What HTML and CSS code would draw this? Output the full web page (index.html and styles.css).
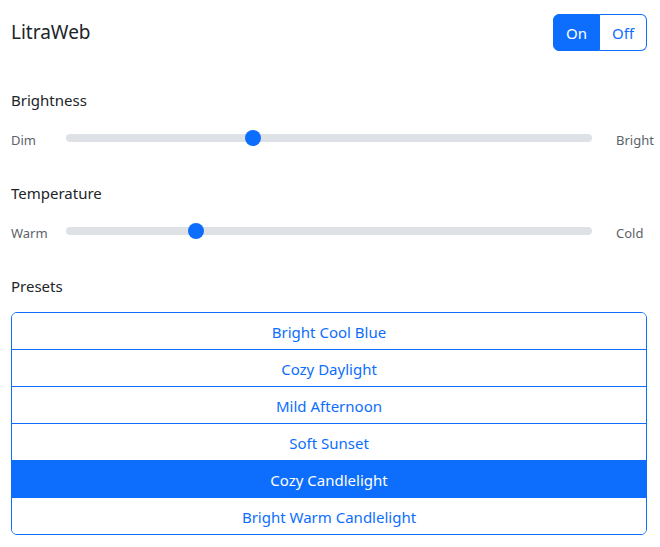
FILE: index.html
```html
<!DOCTYPE html>
<html lang="en">
<head>
<meta charset="utf-8">
<title>LitraWeb</title>
<link rel="stylesheet" href="styles.css">
</head>
<body>
<div class="app">
  <header class="header">
    <h1 class="title">LitraWeb</h1>
    <div class="btn-group" role="group">
      <button class="btn btn-on active">On</button>
      <button class="btn btn-off">Off</button>
    </div>
  </header>

  <section class="control">
    <div class="label">Brightness</div>
    <div class="slider-row">
      <span class="end end-left">Dim</span>
      <input class="range" type="range" min="0" max="100" value="35.1">
      <span class="end end-right">Bright</span>
    </div>
  </section>

  <section class="control">
    <div class="label">Temperature</div>
    <div class="slider-row">
      <span class="end end-left">Warm</span>
      <input class="range" type="range" min="0" max="100" value="23.5">
      <span class="end end-right">Cold</span>
    </div>
  </section>

  <section class="presets">
    <div class="label">Presets</div>
    <div class="list">
      <button class="list-item">Bright Cool Blue</button>
      <button class="list-item">Cozy Daylight</button>
      <button class="list-item">Mild Afternoon</button>
      <button class="list-item">Soft Sunset</button>
      <button class="list-item active">Cozy Candlelight</button>
      <button class="list-item">Bright Warm Candlelight</button>
    </div>
  </section>
</div>
</body>
</html>
```

FILE: styles.css
```css
* { box-sizing: border-box; }

html, body {
  margin: 0;
  padding: 0;
  background: #ffffff;
}

body {
  font-family: "Noto Sans", "Open Sans", sans-serif;
  color: #212529;
  font-size: 15px;
}

.app {
  padding: 14px 13px 0 11px;
}

.header {
  display: flex;
  justify-content: space-between;
  align-items: center;
  height: 37px;
}

.title {
  margin: 0;
  font-size: 19px;
  font-weight: 400;
  line-height: 24px;
  margin-top: -2px;
}

.btn-group {
  display: flex;
  height: 37px;
}

.btn {
  font-family: inherit;
  font-size: 15px;
  width: 47px;
  height: 37px;
  padding: 1px 0 0;
  border: 1px solid #0d6efd;
  background: #ffffff;
  color: #0d6efd;
  cursor: pointer;
}

.btn-on {
  border-radius: 6px 0 0 6px;
}

.btn-off {
  border-radius: 0 6px 6px 0;
  border-left: 0;
}

.btn.active {
  background: #0d6efd;
  color: #ffffff;
}

.control {
  margin-top: 37px;
}

.control + .control {
  margin-top: 31px;
}

.label {
  line-height: 24px;
  font-size: 15px;
}

.slider-row {
  margin-top: 14px;
  display: flex;
  align-items: center;
  height: 24px;
}

.end {
  font-size: 13px;
  color: #5c636a;
  line-height: 24px;
  margin-top: 4px;
}

.end-left {
  width: 55px;
  flex: none;
}

.end-right {
  width: 55px;
  flex: none;
  padding-left: 24px;
  white-space: nowrap;
}

.range {
  flex: 1;
  margin: 0;
  height: 16px;
  -webkit-appearance: none;
  appearance: none;
  background: transparent;
}

.range::-webkit-slider-runnable-track {
  height: 8px;
  border-radius: 4px;
  background: #dee2e6;
}

.range::-webkit-slider-thumb {
  -webkit-appearance: none;
  appearance: none;
  width: 16px;
  height: 16px;
  border-radius: 50%;
  background: #0d6efd;
  border: 0;
  margin-top: -4px;
}

.presets {
  margin-top: 31px;
}

.list {
  margin-top: 14px;
  display: flex;
  flex-direction: column;
  border: 1px solid #0d6efd;
  border-radius: 6px;
  overflow: hidden;
}

.list-item {
  font-family: inherit;
  font-size: 15px;
  height: 37px;
  padding: 2px 0 0;
  border: 0;
  border-top: 1px solid #0d6efd;
  background: #ffffff;
  color: #0d6efd;
  text-align: center;
  cursor: pointer;
}

.list-item:first-child {
  border-top: 0;
  height: 36px;
}

.list-item.active {
  background: #0d6efd;
  color: #ffffff;
}
```
